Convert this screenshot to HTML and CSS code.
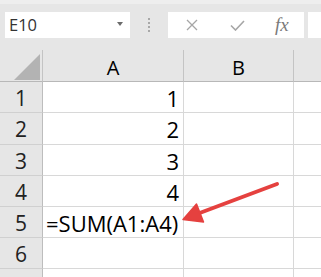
FILE: index.html
```html
<!DOCTYPE html>
<html>
<head>
<meta charset="utf-8">
<link rel="stylesheet" href="styles.css">
</head>
<body>
<div class="app">
  <div class="topstrip"></div>
  <div class="toolbar">
    <div class="namebox">
      <span class="name">E10</span>
      <span class="caret"></span>
    </div>
    <div class="grip"><i></i><i></i><i></i><i></i></div>
    <div class="fbox">
      <svg class="ico" width="12" height="12" viewBox="0 0 12 12"><path d="M1 1 L11 11 M11 1 L1 11" stroke="#a6a6a6" stroke-width="1.3" fill="none"/></svg>
      <svg class="ico" width="15" height="11" viewBox="0 0 15 11"><path d="M1 5.5 L5.5 10 L14 1" stroke="#a6a6a6" stroke-width="1.6" fill="none"/></svg>
      <span class="fx">fx</span>
    </div>
    <div class="fbox2"></div>
  </div>
  <div class="sheet">
    <div class="row head">
      <div class="c rh corner"><span class="tri"></span></div>
      <div class="c ca hc">A</div>
      <div class="c cb hc">B</div>
      <div class="c cc hc"></div>
    </div>
    <div class="row r31">
      <div class="c rh">1</div><div class="c ca num">1</div><div class="c cb"></div><div class="c cc"></div>
    </div>
    <div class="row r32">
      <div class="c rh">2</div><div class="c ca num">2</div><div class="c cb"></div><div class="c cc"></div>
    </div>
    <div class="row r31">
      <div class="c rh">3</div><div class="c ca num">3</div><div class="c cb"></div><div class="c cc"></div>
    </div>
    <div class="row r31">
      <div class="c rh">4</div><div class="c ca num">4</div><div class="c cb"></div><div class="c cc"></div>
    </div>
    <div class="row r31">
      <div class="c rh">5</div><div class="c ca txt">=SUM(A1:A4)</div><div class="c cb"></div><div class="c cc"></div>
    </div>
    <div class="row r31">
      <div class="c rh">6</div><div class="c ca"></div><div class="c cb"></div><div class="c cc"></div>
    </div>
    <div class="row r31">
      <div class="c rh"></div><div class="c ca"></div><div class="c cb"></div><div class="c cc"></div>
    </div>
  </div>
  <svg class="arrow" width="321" height="277" viewBox="0 0 321 277">
    <line x1="277" y1="184" x2="197" y2="214" stroke="#e5413f" stroke-width="4" stroke-linecap="round"/>
    <polygon points="183,219.5 196.5,204 203.5,222" fill="#e5413f" stroke="#e5413f" stroke-width="1.5" stroke-linejoin="round"/>
  </svg>
</div>
</body>
</html>
```

FILE: styles.css
```css
html, body {
  margin: 0;
  padding: 0;
}
body {
  width: 321px;
  height: 277px;
  overflow: hidden;
  background: #e6e6e6;
  font-family: "Open Sans", "Liberation Sans", sans-serif;
}
.app {
  position: relative;
  width: 321px;
  height: 277px;
  overflow: hidden;
}
.topstrip {
  height: 4px;
  background: #eeeeee;
}
.toolbar {
  display: flex;
  align-items: flex-start;
  padding-top: 8px;
  height: 38px;
  box-sizing: border-box;
  padding-left: 5px;
}
.namebox {
  width: 125px;
  height: 26px;
  background: #fff;
  display: flex;
  align-items: center;
  justify-content: space-between;
  box-sizing: border-box;
  padding: 0 7px 0 4px;
}
.name {
  font-size: 16.5px;
  color: #333;
  line-height: 26px;
}
.caret {
  width: 0;
  height: 0;
  border-left: 3.5px solid transparent;
  border-right: 3.5px solid transparent;
  border-top: 4px solid #6b6b6b;
  margin-top: -2px;
}
.grip {
  width: 38px;
  height: 26px;
  display: flex;
  flex-direction: column;
  align-items: center;
  justify-content: center;
  gap: 2px;
}
.grip i {
  display: block;
  width: 2px;
  height: 2px;
  background: #a8a8a8;
}
.fbox {
  width: 136px;
  height: 26px;
  background: #fff;
  display: flex;
  align-items: center;
  box-sizing: border-box;
  padding-left: 18px;
}
.fbox .ico:first-child {
  margin-right: 32px;
}
.fbox .ico:nth-child(2) {
  margin-right: 30px;
}
.fx {
  font-family: "Liberation Serif", serif;
  font-style: italic;
  font-size: 19px;
  color: #7a7a7a;
  line-height: 26px;
  margin-top: -1px;
}
.fbox2 {
  margin-left: 4px;
  flex: 1;
  height: 26px;
  background: #fff;
}
.sheet {
  margin-top: 8px;
}
.row {
  display: flex;
}
.c {
  box-sizing: border-box;
  border-right: 1px solid #d8d8d8;
  border-bottom: 1px solid #d8d8d8;
  background: #fff;
  color: #000;
  display: flex;
  align-items: center;
}
.head {
  height: 32px;
}
.head .c {
  background: #e6e6e6;
  border-right-color: #c4c4c4;
  border-bottom-color: #b8b8b8;
  font-size: 20px;
  justify-content: center;
  padding-top: 3px;
}
.r31 { height: 31px; }
.r32 { height: 32px; }
.rh {
  width: 43px;
  background: #e6e6e6;
  border-right-color: #bdbdbd;
  border-bottom-color: #d0d0d0;
  justify-content: center;
  font-size: 21px;
  color: #222;
  padding-top: 1px;
}
.ca { width: 141px; }
.cb { width: 110px; }
.cc { flex: 1; border-right: none; }
.head .cc { border-right: none; }
.corner {
  position: relative;
}
.tri {
  position: absolute;
  right: 2px;
  bottom: 1px;
  width: 0;
  height: 0;
  border-left: 26px solid transparent;
  border-bottom: 26px solid #b3b3b3;
}
.num {
  justify-content: flex-end;
  padding-right: 4px;
  font-size: 22px;
  padding-top: 1px;
}
.txt {
  padding-left: 3px;
  font-size: 22px;
  white-space: nowrap;
  overflow: visible;
  padding-top: 1px;
}
.arrow {
  position: absolute;
  left: 0;
  top: 0;
  pointer-events: none;
}
```
